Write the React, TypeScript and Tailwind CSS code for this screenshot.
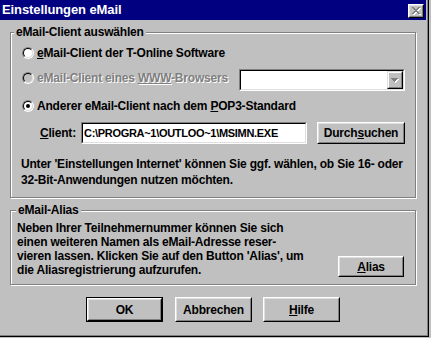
import React from "react";

function Radio({ checked = false, disabled = false }: { checked?: boolean; disabled?: boolean }) {
  return (
    <div className="w-[12px] h-[12px] shrink-0 rounded-full border border-t-[#808080] border-l-[#808080] border-b-white border-r-white">
      <div
        className={
          disabled
            ? "w-full h-full rounded-full border border-t-black border-l-black border-b-[#dfdfdf] border-r-[#dfdfdf] bg-[#c0c0c0] flex items-center justify-center"
            : "w-full h-full rounded-full border border-t-black border-l-black border-b-[#dfdfdf] border-r-[#dfdfdf] bg-white flex items-center justify-center"
        }
      >
        {checked && <div className="w-[4px] h-[4px] rounded-full bg-black" />}
      </div>
    </div>
  );
}

function Btn({
  children,
  w,
  h,
  isDefault = false,
  className = "",
}: {
  children: React.ReactNode;
  w: string;
  h: string;
  isDefault?: boolean;
  className?: string;
}) {
  const inner = (
    <div className="w-full h-full border border-t-white border-l-white border-b-black border-r-black">
      <div className="w-full h-full border border-t-[#dfdfdf] border-l-[#dfdfdf] border-b-[#808080] border-r-[#808080] flex items-center justify-center">
        {children}
      </div>
    </div>
  );
  return (
    <div className={`${w} ${h} shrink-0 ${className}`}>
      {isDefault ? <div className="w-full h-full border border-black">{inner}</div> : inner}
    </div>
  );
}

function Sunken({ className, children }: { className: string; children?: React.ReactNode }) {
  return (
    <div className={`${className} shrink-0 border border-t-[#808080] border-l-[#808080] border-b-white border-r-white`}>
      <div className="w-full h-full border border-t-black border-l-black border-b-[#dfdfdf] border-r-[#dfdfdf] bg-white flex items-center">
        {children}
      </div>
    </div>
  );
}

const X_PATH =
  "M0 0h2v1H0z M6 0h2v1H6z M1 1h2v1H1z M5 1h2v1H5z M2 2h4v1H2z M3 3h2v1H3z M2 4h4v1H2z M1 5h2v1H1z M5 5h2v1H5z M0 6h2v1H0z M6 6h2v1H6z";

export default function App() {
  return (
    <div className="w-[431px] h-[338px] bg-[#c0c0c0] overflow-hidden font-['Liberation_Sans',Arial,sans-serif] font-bold text-[12px] tracking-[-0.2px] text-black leading-none">
      <div className="w-[429px] h-[337px] pr-[2px] border-r border-b border-r-black border-b-black shadow-[inset_-1px_-1px_0_#808080] flex flex-col">
        {/* Title bar */}
        <div className="h-[20px] w-full bg-[#000080] flex items-start justify-between shrink-0">
          <span className="text-white text-[13px] tracking-[-0.1px] pl-[2px] mt-[3px] leading-[14px]">Einstellungen eMail</span>
          <div className="mt-[4px] mr-[2px] w-[16px] h-[14px] border border-t-white border-l-white border-b-black border-r-black">
            <div className="w-full h-full border border-t-[#dfdfdf] border-l-[#dfdfdf] border-b-[#808080] border-r-[#808080] bg-[#c0c0c0] flex items-center justify-center">
              <svg width="9" height="8" viewBox="0 0 9 8" shapeRendering="crispEdges">
                <path d={X_PATH} fill="#ffffff" transform="translate(1 1)" />
                <path d={X_PATH} fill="#808080" />
              </svg>
            </div>
          </div>
        </div>

        <div className="px-[10px] flex flex-col">
          {/* Group 1 */}
          <div className="mt-[12px] h-[166px] relative border border-[#808080] shadow-[inset_1px_1px_0_#fff,1px_1px_0_#fff] pl-[11px] pr-[10px] flex flex-col">
            <span className="absolute left-[3px] top-[-8px] px-[2px] bg-[#c0c0c0] leading-[14px]">
              eMail-Client auswählen
            </span>

            <div className="mt-[12px] h-[16px] flex items-center gap-[3px]">
              <Radio />
              <span>
                <u>e</u>Mail-Client der T-Online Software
              </span>
            </div>

            <div className="mt-[8px] h-[22px] flex items-start">
              <div className="mt-[1px] h-[16px] flex items-center gap-[3px]">
                <Radio disabled />
                <span className="text-[#808080] [text-shadow:1px_1px_0_#fff]">
                  eMail-Client eines <u>WWW</u>-Browsers
                </span>
              </div>
              <Sunken className="ml-auto w-[166px] h-[22px]">
                <div className="ml-auto mr-0 w-[16px] h-[18px] border border-t-[#dfdfdf] border-l-[#dfdfdf] border-b-black border-r-black">
                  <div className="w-full h-full border border-t-white border-l-white border-b-[#808080] border-r-[#808080] bg-[#c0c0c0] flex items-center justify-center">
                    <svg width="8" height="5" viewBox="0 0 8 5" shapeRendering="crispEdges">
                      <path d="M1 1h7v1H1z M2 2h5v1H2z M3 3h3v1H3z M4 4h1v1H4z" fill="#ffffff" />
                      <path d="M0 0h7v1H0z M1 1h5v1H1z M2 2h3v1H2z M3 3h1v1H3z" fill="#808080" />
                    </svg>
                  </div>
                </div>
              </Sunken>
            </div>

            <div className="mt-[7px] h-[16px] flex items-center gap-[3px]">
              <Radio checked />
              <span>
                Anderer eMail-Client nach dem <u>P</u>OP3-Standard
              </span>
            </div>

            <div className="mt-[8px] h-[22px] flex items-center">
              <span className="ml-[18px] w-[42px]">
                <u>C</u>lient:
              </span>
              <Sunken className="w-[226px] h-[22px]">
                <span className="pl-[1px] text-[11px] tracking-[-0.3px]">C:\PROGRA~1\OUTLOO~1\MSIMN.EXE</span>
              </Sunken>
              <Btn w="w-[88px]" h="h-[22px]" className="ml-[10px]">
                <span>
                  Durch<u>s</u>uchen
                </span>
              </Btn>
            </div>

            <p className="mt-[12px] -ml-px leading-[16px] whitespace-nowrap">
              Unter 'Einstellungen Internet' können Sie ggf. wählen, ob Sie 16- oder
              <br />
              32-Bit-Anwendungen nutzen möchten.
            </p>
          </div>

          {/* Group 2 */}
          <div className="mt-[12px] h-[75px] relative border border-[#808080] shadow-[inset_1px_1px_0_#fff,1px_1px_0_#fff] pl-[6px] pr-[11px] pt-[10px] flex items-start">
            <span className="absolute left-[5px] top-[-8px] px-[2px] bg-[#c0c0c0] leading-[14px]">eMail-Alias</span>
            <div className="h-[56px] w-full flex items-end">
              <p className="leading-[14px] whitespace-nowrap">
                Neben Ihrer Teilnehmernummer können Sie sich
                <br />
                einen weiteren Namen als eMail-Adresse reser-
                <br />
                vieren lassen. Klicken Sie auf den Button 'Alias', um
                <br />
                die Aliasregistrierung aufzurufen.
              </p>
              <Btn w="w-[66px]" h="h-[21px]" className="ml-auto">
                <span>
                  <u>A</u>lias
                </span>
              </Btn>
            </div>
          </div>
        </div>

        {/* Buttons */}
        <div className="mt-[12px] pl-[86px] flex">
          <Btn w="w-[77px]" h="h-[25px]" isDefault>
            <span>OK</span>
          </Btn>
          <Btn w="w-[77px]" h="h-[25px]" className="ml-[12px]">
            <span>Abbrechen</span>
          </Btn>
          <Btn w="w-[77px]" h="h-[25px]" className="ml-[11px]">
            <span>
              <u>H</u>ilfe
            </span>
          </Btn>
        </div>
      </div>
    </div>
  );
}
